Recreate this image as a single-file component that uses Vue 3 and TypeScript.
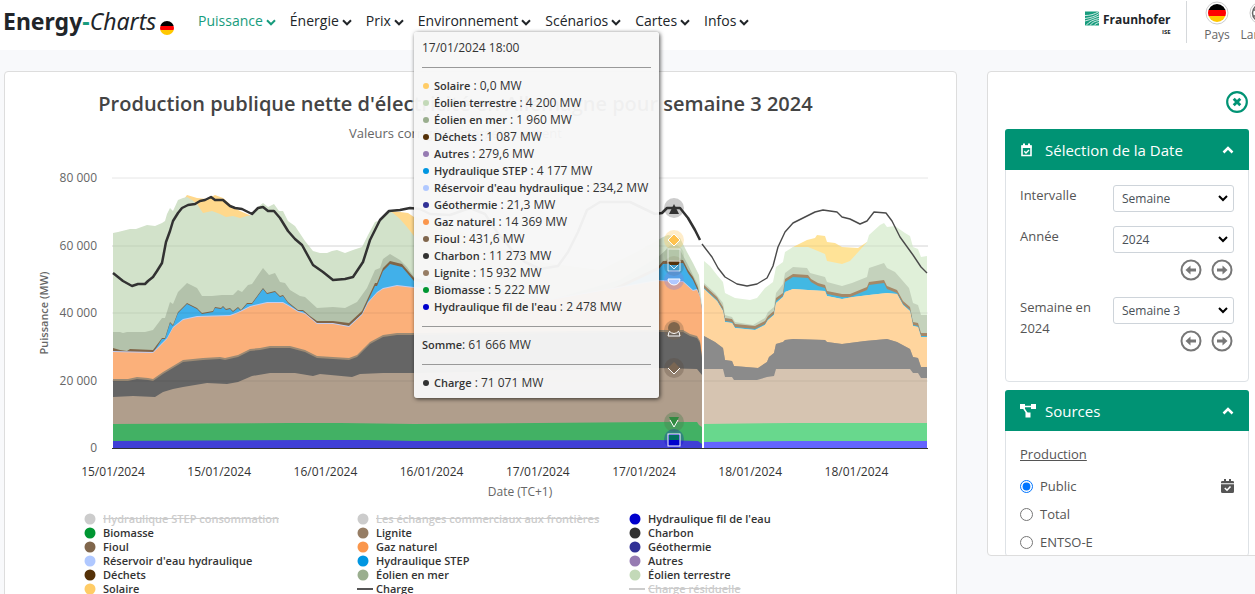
<script setup lang="ts">
import { ref } from 'vue'

type Pt = [number, number]
interface Layer { name: string; color: string; forecast: string; past: Pt[]; next: Pt[] }
interface Series { name: string; color: string; value?: string; off?: boolean; line?: boolean }

const BASE = 448
const menu = ['Puissance', 'Énergie', 'Prix', 'Environnement', 'Scénarios', 'Cartes', 'Infos']

const solar: Pt[] = [[113, 234], [114, 300], [180, 300], [184, 199], [187, 195], [197, 198], [207, 199], [215, 195], [223, 198], [233, 207], [240, 211], [247, 214], [252, 216], [256, 300], [386, 300], [389, 211], [400, 212], [408, 213], [414, 217], [440, 222], [480, 240], [500, 300], [640, 300], [702, 310]]
const solarNext: Pt[] = [[792, 249], [793, 247], [807, 240], [815, 238], [817, 235], [825, 236], [827, 242], [835, 243], [842, 247], [858, 248], [867, 242]]

const onshore: Pt[] = [[113, 233], [118, 232], [130, 229], [136, 229], [147, 225], [155, 226], [162, 223], [165, 221], [167, 214], [170, 208], [173, 211], [178, 200], [183, 198], [187, 197], [192, 200], [197, 204], [203, 213], [212, 211], [220, 214], [226, 217], [233, 216], [240, 218], [247, 216], [252, 215], [257, 208], [263, 203], [268, 207], [274, 204], [279, 211], [283, 211], [288, 221], [295, 226], [305, 241], [313, 251], [320, 253], [327, 253], [332, 251], [337, 250], [345, 253], [353, 250], [362, 247], [368, 235], [375, 222], [380, 220], [389, 211], [393, 213], [400, 219], [407, 227], [414, 236], [450, 250], [480, 240], [540, 262], [600, 270], [640, 250], [658, 240], [663, 237], [668, 235], [680, 238], [687, 252], [693, 263], [699, 275], [702, 307]]
const onshoreNext: Pt[] = [[704, 261], [710, 266], [717, 275], [723, 282], [725, 293], [735, 298], [750, 300], [757, 298], [765, 288], [773, 282], [776, 267], [783, 262], [785, 252], [793, 247], [808, 247], [813, 249], [825, 254], [827, 261], [842, 264], [850, 261], [860, 250], [867, 242], [869, 235], [880, 225], [884, 223], [887, 227], [895, 226], [905, 233], [910, 236], [913, 247], [918, 249], [921, 257], [927, 256]]

const offshore: Pt[] = [[113, 332], [120, 332], [123, 333], [127, 332], [145, 332], [153, 330], [162, 318], [165, 318], [170, 302], [173, 304], [178, 292], [187, 283], [197, 288], [202, 296], [212, 296], [222, 295], [233, 295], [238, 290], [242, 292], [248, 285], [252, 284], [263, 268], [269, 275], [275, 273], [280, 282], [285, 283], [290, 290], [300, 296], [305, 297], [317, 308], [333, 307], [345, 308], [357, 302], [367, 288], [375, 270], [380, 268], [383, 259], [390, 254], [400, 260], [407, 267], [414, 277], [480, 285], [550, 300], [620, 280], [658, 257], [667, 249], [680, 250], [687, 263], [693, 275], [698, 285], [702, 308]]
const offshoreNext: Pt[] = [[704, 283], [715, 293], [723, 303], [725, 315], [732, 317], [735, 322], [753, 325], [765, 318], [768, 312], [774, 307], [776, 293], [783, 284], [785, 273], [793, 267], [807, 268], [810, 273], [825, 277], [827, 282], [842, 286], [852, 283], [867, 277], [869, 268], [884, 263], [887, 268], [895, 272], [909, 288], [913, 303], [918, 305], [921, 315], [927, 315]]

const fuel: Pt[] = [[113, 348], [120, 350], [127, 351], [130, 349], [153, 350], [162, 338], [165, 338], [170, 322], [173, 325], [178, 312], [187, 303], [197, 308], [202, 313], [213, 311], [215, 307], [221, 308], [223, 306], [226, 309], [230, 308], [233, 311], [238, 307], [241, 310], [247, 303], [252, 303], [263, 288], [267, 293], [275, 291], [280, 296], [283, 295], [288, 302], [298, 310], [303, 310], [310, 316], [317, 321], [333, 321], [349, 323], [362, 311], [368, 298], [375, 283], [377, 283], [383, 268], [390, 261], [402, 264], [414, 278], [480, 290], [550, 315], [620, 285], [658, 267], [663, 261], [683, 260], [688, 270], [693, 277], [698, 288], [702, 309]]
const fuelNext: Pt[] = [[704, 285], [717, 297], [723, 307], [725, 318], [732, 319], [735, 324], [755, 326], [765, 321], [768, 316], [774, 311], [776, 298], [783, 293], [785, 279], [793, 274], [808, 275], [811, 279], [818, 283], [825, 285], [827, 291], [842, 294], [850, 294], [867, 287], [869, 282], [884, 280], [887, 286], [897, 290], [903, 301], [910, 307], [913, 322], [918, 323], [921, 333], [927, 333]]

const gas: Pt[] = [[113, 352], [153, 353], [162, 344], [167, 339], [173, 328], [183, 320], [197, 317], [230, 316], [238, 313], [250, 307], [267, 303], [283, 303], [290, 307], [298, 312], [305, 314], [317, 324], [333, 324], [349, 327], [362, 315], [368, 303], [377, 293], [383, 289], [397, 286], [414, 288], [550, 300], [658, 281], [683, 282], [693, 291], [697, 290], [700, 297], [702, 311]]
const gasNext: Pt[] = [[704, 289], [717, 301], [723, 311], [725, 322], [732, 323], [735, 328], [755, 330], [765, 325], [768, 320], [774, 315], [776, 303], [783, 297], [785, 292], [793, 289], [808, 290], [825, 291], [827, 296], [842, 299], [853, 297], [869, 295], [887, 293], [897, 294], [903, 305], [910, 311], [913, 326], [918, 327], [921, 337], [927, 337]]

const coal: Pt[] = [[113, 380], [128, 380], [137, 378], [148, 379], [153, 380], [163, 373], [173, 367], [183, 361], [203, 359], [220, 358], [225, 359], [238, 356], [250, 350], [260, 349], [270, 347], [290, 347], [305, 351], [317, 357], [349, 359], [357, 356], [370, 343], [383, 336], [397, 334], [414, 334], [658, 331], [683, 331], [690, 335], [697, 337], [700, 342], [702, 357]]
const coalNext: Pt[] = [[704, 336], [715, 342], [723, 348], [725, 360], [732, 361], [734, 366], [758, 368], [767, 362], [769, 357], [774, 353], [776, 344], [783, 342], [785, 340], [793, 339], [825, 340], [827, 342], [842, 344], [865, 341], [887, 339], [897, 342], [910, 349], [913, 357], [918, 358], [921, 367], [927, 367]]

const lignite: Pt[] = [[113, 397], [133, 396], [155, 397], [163, 392], [173, 389], [183, 387], [207, 383], [227, 384], [238, 382], [252, 376], [270, 373], [295, 373], [313, 376], [320, 374], [352, 377], [360, 374], [383, 373], [414, 373], [658, 368], [697, 369], [702, 375]]
const ligniteNext: Pt[] = [[704, 369], [723, 369], [725, 377], [732, 377], [734, 380], [757, 380], [767, 377], [774, 376], [776, 369], [910, 369], [913, 373], [918, 373], [921, 378], [927, 378]]

const biomass: Pt[] = [[113, 424], [290, 423], [340, 423], [414, 424], [658, 422], [697, 422], [699, 425], [702, 427]]
const biomassNext: Pt[] = [[704, 424], [793, 423], [927, 423]]
const hydro: Pt[] = [[113, 441], [310, 440], [366, 440], [414, 441], [658, 440], [698, 441], [702, 444]]
const hydroNext: Pt[] = [[704, 442], [793, 441], [927, 441]]

const shift = (pts: Pt[], near: number, far: number): Pt[] =>
  pts.map(([x, y]) => [x, y + (x > 160 && x < 305 ? near : far)])

const layers: Layer[] = [
  { name: 'Solaire', color: '#ffd88c', forecast: '#ffe397', past: solar, next: solarNext },
  { name: 'Éolien terrestre', color: '#d2e2ca', forecast: '#e0f0d9', past: onshore, next: onshoreNext },
  { name: 'Éolien en mer', color: '#b3c2ab', forecast: '#c4d2bc', past: offshore, next: offshoreNext },
  { name: 'Fioul', color: '#806548', forecast: '#a58867', past: fuel, next: fuelNext },
  { name: 'Hydraulique STEP', color: '#41b0ea', forecast: '#42b8e3', past: shift(fuel, 1, 3), next: shift(fuelNext, 3, 3) },
  { name: 'Réservoir', color: '#c3cdf2', forecast: '#cfdfe0', past: shift(gas, -1, -1), next: gasNext },
  { name: 'Gaz naturel', color: '#fbb07a', forecast: '#ffd59e', past: gas, next: gasNext },
  { name: 'Autres', color: '#9c8a74', forecast: '#b9a58b', past: shift(coal, -1, -1), next: coalNext },
  { name: 'Charbon', color: '#656565', forecast: '#8b8b8b', past: shift(coal, 1, 1), next: coalNext },
  { name: 'Lignite', color: '#b09e8c', forecast: '#d6c4b1', past: lignite, next: ligniteNext },
  { name: 'Biomasse', color: '#42b164', forecast: '#68d88d', past: biomass, next: biomassNext },
  { name: "Fil de l'eau", color: '#403fd6', forecast: '#6464ff', past: hydro, next: hydroNext },
]

const load: Pt[] = [[113, 273], [118, 277], [123, 281], [132, 286], [138, 284], [145, 284], [148, 281], [153, 277], [157, 271], [162, 263], [166, 242], [170, 231], [173, 221], [178, 213], [182, 208], [188, 205], [195, 204], [200, 201], [205, 200], [211, 197], [215, 200], [223, 200], [230, 206], [235, 208], [242, 209], [252, 214], [258, 208], [263, 207], [268, 211], [274, 211], [280, 218], [288, 231], [295, 239], [302, 245], [313, 265], [323, 272], [333, 280], [345, 279], [353, 277], [363, 262], [370, 240], [380, 220], [389, 211], [400, 210], [410, 208], [420, 209], [430, 214], [450, 215], [470, 208], [485, 214], [497, 232], [512, 250], [525, 262], [540, 269], [558, 266], [568, 252], [578, 232], [587, 210], [600, 202], [630, 202], [655, 214], [662, 213], [667, 208], [680, 208], [688, 218], [695, 230], [700, 240]]
const loadNext: Pt[] = [[702, 244], [712, 257], [718, 268], [725, 277], [737, 284], [747, 286], [757, 284], [767, 278], [773, 266], [778, 247], [785, 232], [793, 223], [807, 216], [815, 212], [823, 210], [837, 212], [842, 217], [850, 219], [860, 224], [867, 221], [874, 212], [886, 213], [892, 221], [900, 237], [913, 255], [921, 267], [927, 273]]

const line = (pts: Pt[]) => pts.map((p) => p.join(',')).join(' ')
const area = (pts: Pt[]) => `${pts[0][0]},${BASE} ${line(pts)} ${pts[pts.length - 1][0]},${BASE}`

const yTicks = [
  { y: 178, label: '80 000' }, { y: 246, label: '60 000' }, { y: 313, label: '40 000' },
  { y: 381, label: '20 000' }, { y: 448, label: '0' },
]
const xTicks = ['15/01/2024', '15/01/2024', '16/01/2024', '16/01/2024', '17/01/2024', '17/01/2024', '18/01/2024', '18/01/2024']

const tip: Series[] = [
  { name: 'Solaire', color: '#ffcc66', value: '0,0 MW' },
  { name: 'Éolien terrestre', color: '#c3d9b8', value: '4 200 MW' },
  { name: 'Éolien en mer', color: '#9aae8e', value: '1 960 MW' },
  { name: 'Déchets', color: '#553108', value: '1 087 MW' },
  { name: 'Autres', color: '#967bb2', value: '279,6 MW' },
  { name: 'Hydraulique STEP', color: '#0096e1', value: '4 177 MW' },
  { name: "Réservoir d'eau hydraulique", color: '#b0c8ff', value: '234,2 MW' },
  { name: 'Géothermie', color: '#313196', value: '21,3 MW' },
  { name: 'Gaz naturel', color: '#fa964b', value: '14 369 MW' },
  { name: 'Fioul', color: '#80664c', value: '431,6 MW' },
  { name: 'Charbon', color: '#323232', value: '11 273 MW' },
  { name: 'Lignite', color: '#967d64', value: '15 932 MW' },
  { name: 'Biomasse', color: '#009632', value: '5 222 MW' },
  { name: "Hydraulique fil de l'eau", color: '#0000cd', value: '2 478 MW' },
]

const legend: Series[] = [
  { name: 'Hydraulique STEP consommation', color: '#cccccc', off: true },
  { name: 'Les échanges commerciaux aux frontières', color: '#cccccc', off: true },
  { name: "Hydraulique fil de l'eau", color: '#0000cd' },
  { name: 'Biomasse', color: '#009632' },
  { name: 'Lignite', color: '#967d64' },
  { name: 'Charbon', color: '#323232' },
  { name: 'Fioul', color: '#80664c' },
  { name: 'Gaz naturel', color: '#fa964b' },
  { name: 'Géothermie', color: '#313196' },
  { name: "Réservoir d'eau hydraulique", color: '#b0c8ff' },
  { name: 'Hydraulique STEP', color: '#0096e1' },
  { name: 'Autres', color: '#967bb2' },
  { name: 'Déchets', color: '#553108' },
  { name: 'Éolien en mer', color: '#9aae8e' },
  { name: 'Éolien terrestre', color: '#c3d9b8' },
  { name: 'Solaire', color: '#ffcc66' },
  { name: 'Charge', color: '#555555', line: true },
  { name: 'Charge résiduelle', color: '#cccccc', off: true, line: true },
]

const interval = ref('Semaine')
const year = ref('2024')
const week = ref('Semaine 3')
const source = ref('Public')
const sources = ['Public', 'Total', 'ENTSO-E']
</script>

<template>
  <div class="page">
    <header class="top">
      <a class="brand" href="#"><b>Energy</b><b class="dash">-</b><i>Charts</i>
        <svg class="ball" viewBox="0 0 14 14"><defs><clipPath id="ball"><circle cx="7" cy="7" r="7" /></clipPath></defs><g clip-path="url(#ball)"><rect width="14" height="5" /><rect y="5" width="14" height="4" fill="#f00" /><rect y="9" width="14" height="5" fill="#ffc800" /></g></svg>
      </a>
      <nav>
        <a v-for="(m, i) in menu" :key="m" href="#" :class="{ active: i === 0 }">{{ m }}<svg class="chev" viewBox="0 0 10 7"><path d="M1 1.3 5 5.3 9 1.3" /></svg></a>
      </nav>
      <div class="tools">
        <a class="fh" href="#" aria-label="Fraunhofer ISE">
          <svg class="fhicon" viewBox="0 0 14 14"><rect width="14" height="14" fill="#179c7d" /><path d="M0 4C5 4 9 3 14 0M0 7C6 6 10 5 14 2M0 9.500C6 8 10 6 14 4.500M1 14C4 10 9 8 14 7M5 14C7 11 10 9.500 14 9M9 14C10 12.500 12 11.500 14 11" stroke="#fff" stroke-width="0.8" fill="none" /></svg>
          <span class="fhtext"><b>Fraunhofer</b><small>ISE</small></span>
        </a>
        <button class="tool pays">
          <svg viewBox="0 0 24 24"><defs><clipPath id="flag"><circle cx="12" cy="12" r="9" /></clipPath></defs><circle cx="12" cy="12" r="11" fill="#fff" stroke="#ccc" /><g clip-path="url(#flag)"><rect width="24" height="9" /><rect y="9" width="24" height="6" fill="#f00" /><rect y="15" width="24" height="9" fill="#ffc800" /></g></svg>
          <span>Pays</span>
        </button>
        <button class="tool">
          <svg viewBox="0 0 24 24"><circle cx="12" cy="12" r="11" fill="#fff" stroke="#ccc" /><g fill="none" stroke="#666" stroke-width="1.500"><circle cx="12" cy="12" r="8.500" /><ellipse cx="12" cy="12" rx="4" ry="8.500" /><path d="M4 9h16M4 15h16" /></g></svg>
          <span>Langue</span>
        </button>
      </div>
    </header>

    <main class="body">
      <section class="card chart">
        <h1>Production publique nette d'électricité en Allemagne pour semaine 3 2024</h1>
        <p class="sub">Valeurs corrigées énergétiquement</p>
        <svg class="plot" viewBox="5 152 951 352">
          <line x1="112" x2="928" y1="178" y2="178" stroke="#e6e6e6" />
          <line x1="112" x2="928" y1="246" y2="246" stroke="#e6e6e6" />
          <g v-for="l in layers" :key="l.name">
            <polygon :points="area(l.past)" :fill="l.color" />
            <polygon :points="area(l.next)" :fill="l.forecast" />
          </g>
          <g stroke="#000" stroke-opacity="0.07">
            <line x1="112" x2="928" y1="246" y2="246" /><line x1="112" x2="928" y1="313" y2="313" /><line x1="112" x2="928" y1="381" y2="381" />
          </g>
          <line x1="703" x2="703" y1="246" y2="448" stroke="#fff" stroke-width="2" />
          <line x1="112" x2="928" y1="448.500" y2="448.500" stroke="#333" />
          <polyline :points="line(load)" fill="none" stroke="#323232" stroke-width="2.500" stroke-linejoin="round" />
          <polyline :points="line(loadNext)" fill="none" stroke="#4a4a4a" stroke-width="1.400" stroke-linejoin="round" />

          <g class="marks">
            <circle cx="674" cy="208" r="10" fill="#323232" fill-opacity="0.25" />
            <path d="M674 204 679 214H669Z" fill="#323232" />
            <circle cx="674" cy="240" r="10" fill="#ffcc66" fill-opacity="0.35" />
            <circle cx="674" cy="255" r="10" fill="#9aae8e" fill-opacity="0.3" />
            <circle cx="674" cy="266" r="10" fill="#553108" fill-opacity="0.15" />
            <path d="M674 234 680 240 674 246 668 240Z" fill="#ffc24f" stroke="#fff" />
            <rect x="668" y="249" width="12" height="12" fill="#c3d9b8" fill-opacity="0.35" stroke="#fff" stroke-opacity="0.6" />
            <path d="M668 262H680L678 265H670Z" fill="#553108" />
            <path d="M668 261V271H680V261M670 265 674 269 678 265" fill="none" stroke="#fff" stroke-opacity="0.8" />
            <circle cx="674" cy="280" r="10" fill="#8080e0" fill-opacity="0.35" />
            <path d="M668 279A6 6 0 0 0 680 279Z" fill="#b0c8ff" stroke="#fff" />
            <circle cx="674" cy="330" r="10" fill="#80664c" fill-opacity="0.35" />
            <circle cx="674" cy="328" r="6" fill="#80664c" />
            <path d="M669 332 668 336H680L679 332M669 331Q674 336 679 331" fill="none" stroke="#fff" />
            <circle cx="674" cy="368" r="10" fill="#5b4a3b" fill-opacity="0.3" />
            <path d="M674 362 680 368 674 374 668 368Z" fill="#7a6653" />
            <path d="M668 368 674 374 680 368" fill="none" stroke="#fff" />
            <circle cx="674" cy="422" r="10" fill="#4f8050" fill-opacity="0.4" />
            <path d="M669 417H679L674 427Z" fill="#308a40" /><path d="M670 420 674 427 678 420" fill="none" stroke="#fff" />
            <circle cx="674" cy="439" r="10" fill="#0000cd" fill-opacity="0.25" />
            <rect x="668" y="434" width="12" height="12" fill="#0000cd" stroke="#fff" />
            <rect x="669" y="435" width="10" height="5" fill="#007060" />
          </g>

          <text v-for="t in yTicks" :key="t.label" class="ytick" x="97" :y="t.y + 4">{{ t.label }}</text>
          <text v-for="(t, i) in xTicks" :key="i" class="xtick" :x="113 + i * 106.200" y="476">{{ t }}</text>
          <text class="axis" x="520" y="496">Date (TC+1)</text>
          <text class="yaxis" transform="translate(48 313) rotate(-90)">Puissance (MW)</text>
        </svg>

        <div class="legend">
          <button v-for="s in legend" :key="s.name" :class="{ off: s.off }">
            <svg viewBox="0 0 16 12"><line v-if="s.line" x1="0" x2="16" y1="6" y2="6" :stroke="s.color" stroke-width="2" /><circle v-else cx="6" cy="6" r="5.500" :fill="s.color" /></svg>
            <span>{{ s.name }}</span>
          </button>
        </div>
      </section>

      <aside class="card side">
        <button class="close" aria-label="Fermer"><svg viewBox="0 0 22 22"><circle cx="11" cy="11" r="9" /><path d="M8 8 14 14M14 8 8 14" stroke-width="2.600" /></svg></button>

        <section class="panel date">
          <button class="head">
            <svg class="hicon" viewBox="0 0 14 14"><path d="M2 3H11V12.500H2Z" fill="none" stroke="#fff" stroke-width="1.600" /><path d="M1.500 2.500H11.500V5H1.500ZM3 0.500H5V3H3ZM8 0.500H10V3H8Z" fill="#fff" /><path d="M4.300 8.300 6 10 9 7" fill="none" stroke="#fff" stroke-width="1.400" /></svg>
            <span>Sélection de la Date</span>
            <svg class="up" viewBox="0 0 12 8"><path d="M1.500 6.500 6 2 10.500 6.500" /></svg>
          </button>
          <div class="form">
            <div class="row">
              <label for="interval">Intervalle</label>
              <div class="ctl"><select id="interval" v-model="interval"><option>Semaine</option></select><svg class="caret" viewBox="0 0 10 7"><path d="M1 1 5 5 9 1" /></svg></div>
            </div>
            <div class="row tall">
              <label for="year">Année</label>
              <div>
                <div class="ctl"><select id="year" v-model="year"><option>2024</option></select><svg class="caret" viewBox="0 0 10 7"><path d="M1 1 5 5 9 1" /></svg></div>
                <div class="steps">
                  <button aria-label="Année précédente"><svg viewBox="0 0 22 22"><circle cx="11" cy="11" r="9.500" /><path d="M16 11H9" stroke-width="3" /><path class="tri" d="M10.500 6.500V15.500L5.500 11Z" /></svg></button>
                  <button aria-label="Année suivante"><svg viewBox="0 0 22 22"><circle cx="11" cy="11" r="9.500" /><path d="M6 11H13" stroke-width="3" /><path class="tri" d="M11.500 6.500V15.500L16.500 11Z" /></svg></button>
                </div>
              </div>
            </div>
            <div class="row tall">
              <label for="week">Semaine en 2024</label>
              <div>
                <div class="ctl"><select id="week" v-model="week"><option>Semaine 3</option></select><svg class="caret" viewBox="0 0 10 7"><path d="M1 1 5 5 9 1" /></svg></div>
                <div class="steps">
                  <button aria-label="Semaine précédente"><svg viewBox="0 0 22 22"><circle cx="11" cy="11" r="9.500" /><path d="M16 11H9" stroke-width="3" /><path class="tri" d="M10.500 6.500V15.500L5.500 11Z" /></svg></button>
                  <button aria-label="Semaine suivante"><svg viewBox="0 0 22 22"><circle cx="11" cy="11" r="9.500" /><path d="M6 11H13" stroke-width="3" /><path class="tri" d="M11.500 6.500V15.500L16.500 11Z" /></svg></button>
                </div>
              </div>
            </div>
          </div>
        </section>

        <section class="panel">
          <button class="head">
            <svg class="hicon wide" viewBox="0 0 16 14"><path d="M0 0H5V5H0ZM11 0H16V5H11ZM5.500 8.500H10.500V13.500H5.500Z" fill="#fff" /><path d="M4 2.500H12M3.500 4 7.500 10" stroke="#fff" stroke-width="1.500" /></svg>
            <span>Sources</span>
            <svg class="up" viewBox="0 0 12 8"><path d="M1.500 6.500 6 2 10.500 6.500" /></svg>
          </button>
          <div class="sources">
            <u>Production</u>
            <div v-for="s in sources" :key="s" class="radio">
              <label><input v-model="source" type="radio" name="source" :value="s" /><span>{{ s }}</span></label>
              <svg v-if="s === 'Public'" class="cal" viewBox="0 0 13 14"><path d="M3 0H5V2H8V0H10V2H11.500Q13 2 13 3V4.200H0V3Q0 2 1.500 2H3ZM0 5.200H13V12.500Q13 14 11.500 14H1.500Q0 14 0 12.500Z" fill="#555" /><path d="M3.800 9 6 11.200 9.500 7.500" fill="none" stroke="#fff" stroke-width="1.600" /></svg>
            </div>
          </div>
        </section>
      </aside>
    </main>

    <div class="tip" role="tooltip">
      <div>17/01/2024 18:00</div>
      <hr />
      <ul>
        <li v-for="s in tip" :key="s.name"><span class="dot" :style="{ background: s.color }"></span><b>{{ s.name }}</b> : {{ s.value }}</li>
      </ul>
      <hr />
      <div><b>Somme</b>: 61 666 MW</div>
      <hr />
      <div class="load"><span class="dot"></span><b>Charge</b> : 71 071 MW</div>
    </div>
  </div>
</template>

<style>
body { background: #f8f9fb; }
</style>

<style scoped>
.page { position: relative; height: 100vh; overflow: hidden; font-family: "Open Sans", "Noto Sans", sans-serif; color: #212529; box-sizing: border-box; }
.page * { box-sizing: border-box; }
button { border: 0; background: none; padding: 0; font: inherit; color: inherit; cursor: pointer; }
a { color: inherit; text-decoration: none; }
svg { display: block; flex: none; }

.top { display: flex; height: 50px; background: #fff; padding-left: 3px; }
.brand { display: flex; width: 195px; flex: none; font-family: "Noto Sans", sans-serif; font-size: 23px; line-height: 43px; white-space: nowrap; }
.dash { color: #179c7d; }
.ball { width: 14px; height: 14px; margin: 21px 0 0 4px; }
nav { display: flex; gap: 14px; line-height: 42px; font-size: 14px; }
nav a { display: flex; align-items: center; gap: 3px; height: 42px; }
nav .active { color: #179c7d; }
.chev { width: 10px; height: 7px; margin-top: 2px; fill: none; stroke: currentColor; stroke-width: 2; }
.tools { display: flex; margin-left: auto; width: 170px; flex: none; }
.fh { display: flex; flex: none; gap: 4px; width: 102px; height: 42px; margin-top: 1px; padding-top: 10px; border-right: 1px solid #d5d8db; }
.fhicon { width: 14px; height: 15px; }
.fhtext { display: flex; flex-direction: column; align-items: flex-end; font-size: 12px; line-height: 18px; }
.fhtext small { font-size: 6px; line-height: 6px; font-weight: 700; }
.tool { display: flex; flex: none; flex-direction: column; align-items: center; width: 44px; font-size: 12px; line-height: 19px; color: #666; padding-top: 1px; }
.tool svg { width: 24px; height: 24px; }
.pays { margin-left: 8px; }

.body { display: flex; gap: 30px; align-items: flex-start; width: calc(100% + 12px); padding: 21px 0 0 4px; }
.card { background: #fff; border: 1px solid #ddd; border-radius: 4px; }
.chart { flex: 1; min-width: 0; padding-bottom: 20px; color: #444; }
h1 { margin: 17px 50px 0 0; font-size: 20px; line-height: 30px; font-weight: 600; text-align: center; white-space: nowrap; }
.sub { margin: 4px 50px 0 0; font-size: 13px; line-height: 20px; text-align: center; color: #666; }
.plot { width: 100%; height: auto; margin-top: 9px; }
text { font-family: "Open Sans", sans-serif; font-size: 11px; fill: #666; }
.ytick { text-anchor: end; font-size: 12px; }
.xtick { text-anchor: middle; font-size: 12px; fill: #333; }
.axis { text-anchor: middle; font-size: 12px; }
.yaxis { text-anchor: middle; font-weight: 600; }
.legend { display: grid; grid-template-columns: 273px 272px 1fr; padding-left: 79px; margin-top: 8px; }
.legend button { display: flex; align-items: center; gap: 3px; height: 14px; font-size: 11px; line-height: 14px; font-weight: 600; color: #333; white-space: nowrap; }
.legend svg { width: 16px; height: 12px; }
.legend .off { color: #ccc; text-decoration: line-through; }

.side { width: 280px; flex: none; height: calc(100vh - 109px); overflow: hidden; padding: 18px 17px 0; color: #555; }
.close { display: block; width: 24px; margin: 0 0 15px auto; height: 24px; }
.close svg { width: 24px; height: 24px; fill: none; stroke: #009374; stroke-width: 2; }
.panel { width: 244px; border: 1px solid #dee2e6; border-radius: 4px; }
.side .close { margin-right: 0; }
.date { height: 253px; margin-bottom: 8px; }
.head { display: flex; align-items: center; width: 244px; height: 41px; margin: -1px; padding: 0 15px 0 15px; border-radius: 3px 3px 0 0; background: #009374; color: #fff; font-size: 15px; }
.head span { flex: 1; text-align: left; }
.hicon { width: 14px; height: 14px; margin-right: 11px; }
.wide { width: 16px; margin-right: 9px; }
.up { width: 12px; height: 8px; fill: none; stroke: #fff; stroke-width: 2.5; }
.form { padding: 16px 14px 0; font-size: 13px; }
.row { display: flex; justify-content: space-between; height: 41px; line-height: 21px; }
.tall { height: 71px; }
.row label { width: 80px; }
.ctl { position: relative; width: 121px; }
select { display: block; width: 121px; height: 27px; appearance: none; border: 1px solid #ced4da; border-radius: 3px; background: #fff; padding: 0 8px; font: 12px "Open Sans", sans-serif; color: #495057; }
.caret { position: absolute; right: 6px; top: 10px; width: 10px; height: 7px; fill: none; stroke: #000; stroke-width: 2; pointer-events: none; }
.steps { display: flex; justify-content: flex-end; gap: 9px; margin-top: 6px; padding-right: 1px; }
.steps svg { width: 22px; height: 22px; fill: none; stroke: #777; stroke-width: 2; }
.steps .tri { fill: #777; stroke: none; }
.sources { padding: 14px 14px 0; font-size: 13px; line-height: 21px; }
.sources u { display: block; margin-bottom: 7px; }
.radio { display: flex; justify-content: space-between; align-items: center; height: 28px; }
.radio label { display: flex; align-items: center; gap: 7px; }
.radio input { width: 13px; height: 13px; margin: 0; accent-color: #0075ff; }
.cal { width: 13px; height: 14px; }

.tip { position: absolute; left: 414px; top: 32px; width: 245px; padding: 7px 8px; border-radius: 3px; background: rgba(247, 247, 247, 0.96); box-shadow: 1px 1px 4px rgba(0, 0, 0, 0.7); font-size: 12px; line-height: 17px; color: #333; white-space: nowrap; }
.tip b { font-size: 11px; font-weight: 600; }
.tip hr { height: 1px; margin: 11px 0 9px; border: 0; background: #999; }
.tip ul { margin: 0; padding: 0; list-style: none; }
.tip li { height: 17px; }
.dot { display: inline-block; width: 6px; height: 6px; margin: 0 5px 1px 1px; border-radius: 50%; background: #323232; }
</style>
